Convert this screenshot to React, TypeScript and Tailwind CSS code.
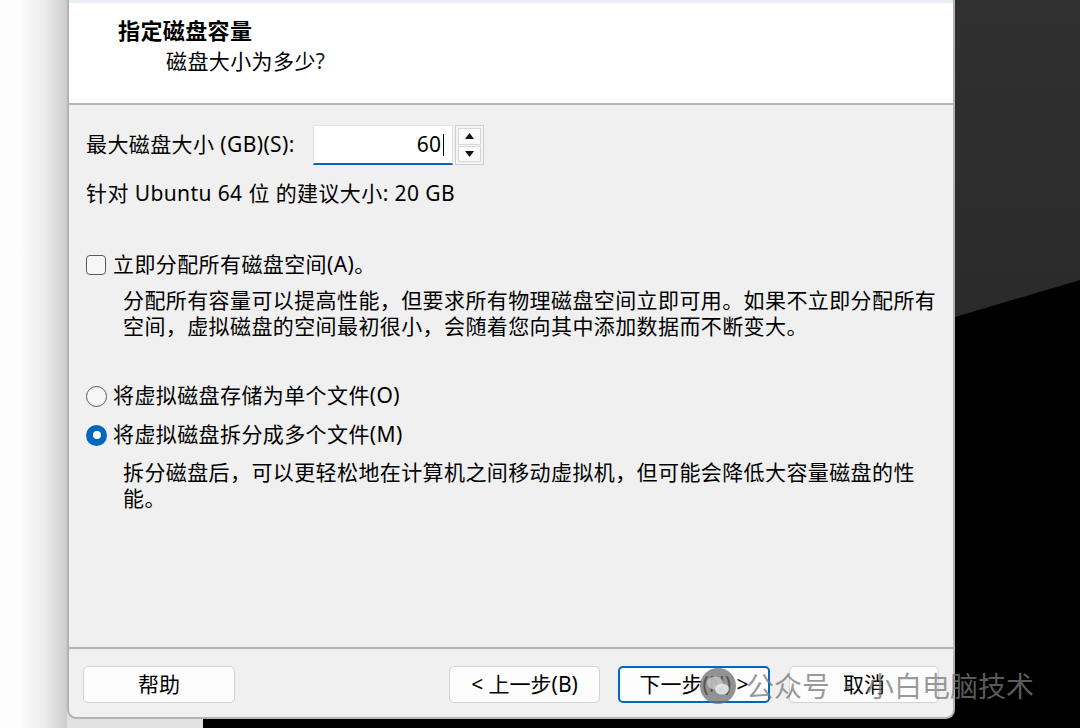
import React from "react";

const font = "font-['Noto_Sans','Noto_Sans_CJK_SC',sans-serif]";

function Btn({ text, primary, w }: { text: string; primary?: boolean; w: string }) {
  return (
    <div
      className={`flex h-[37px] ${w} items-center justify-center rounded-[5px] bg-[#fdfdfd] text-[21px] text-black ${
        primary ? "border-2 border-[#0067c0]" : "border border-[#d2d2d2]"
      }`}
    >
      {text}
    </div>
  );
}

function Radio({ checked, label }: { checked?: boolean; label: string }) {
  return (
    <div className="flex h-[28px] items-center">
      {checked ? (
        <div className="flex h-[21px] w-[21px] items-center justify-center rounded-full bg-[#0067c0]">
          <div className="h-[8px] w-[8px] rounded-full bg-white" />
        </div>
      ) : (
        <div className="h-[21px] w-[21px] rounded-full border-[1.5px] border-[#5a5a5a] bg-[#f6f6f6]" />
      )}
      <span className="ml-[6px]">{label}</span>
    </div>
  );
}

export default function App() {
  return (
    <div className={`relative flex h-[728px] w-[1080px] overflow-hidden bg-[#2b2b2b] ${font}`}>
      {/* shadow on the left */}
      <div className="w-[67px] shrink-0 bg-[linear-gradient(to_right,#fdfdfd_20px,#ececec_45px,#cdcdcd_67px)]" />

      {/* dialog */}
      <div className="flex w-[888px] shrink-0 flex-col bg-[linear-gradient(to_right,#e2e2e2_136px,#000_136px)]">
        <div className="flex h-[719px] flex-col overflow-hidden rounded-b-[9px] border-x-2 border-b-2 border-[#b3b3b3] bg-[#f0f0f0] text-[21px] tracking-[0.4px] text-black">
          {/* header */}
          <div className="h-[105px] shrink-0 border-b-2 border-[#b5b5b5] bg-white">
            <div className="h-[3px] bg-[#e9eef6]" />
            <div className="pl-[49px] pt-[14px] text-[22px] font-bold leading-[26px]">指定磁盘容量</div>
            <div className="pl-[97px] pt-[5px] text-[21px] leading-[26px]">
              磁盘大小为多少<span className="text-[#222]">?</span>
            </div>
          </div>

          {/* body */}
          <div className="flex flex-1 flex-col whitespace-nowrap pl-[17px] pt-[20px]">
            <div className="flex h-[40px] items-center">
              <span className="w-[227px]">最大磁盘大小 (GB)(S):</span>
              <div className="flex h-[40px] w-[140px] items-center justify-end border border-b-2 border-[#e3e3e3] border-b-[#0067c0] bg-white pr-[8px]">
                <span>60</span>
                <div className="ml-[1px] h-[22px] w-[1.5px] bg-black" />
              </div>
              <div className="ml-[2px] flex h-[40px] w-[29px] flex-col gap-[1px] border border-[#cfcfcf] bg-[#f4f4f4] p-[2px]">
                <div className="flex flex-1 items-center justify-center border border-[#d8d8d8] bg-[#fafafa]">
                  <svg width="9" height="6" viewBox="0 0 9 6">
                    <path d="M4.5 0 L9 6 L0 6 Z" fill="#111" />
                  </svg>
                </div>
                <div className="flex flex-1 items-center justify-center border border-[#d8d8d8] bg-[#fafafa]">
                  <svg width="9" height="6" viewBox="0 0 9 6">
                    <path d="M0 0 L9 0 L4.5 6 Z" fill="#111" />
                  </svg>
                </div>
              </div>
            </div>

            <div className="mt-[15px] flex h-[28px] items-center">针对 Ubuntu 64 位 的建议大小: 20 GB</div>

            <div className="mt-[43px] flex h-[28px] items-center">
              <div className="h-[20px] w-[20px] rounded-[4px] border-[1.5px] border-[#5a5a5a] bg-[#f6f6f6]" />
              <span className="ml-[7px]">立即分配所有磁盘空间(A)。</span>
            </div>
            <div className="mt-[8px] pl-[37px] leading-[26px]">
              <div>分配所有容量可以提高性能，但要求所有物理磁盘空间立即可用。如果不立即分配所有</div>
              <div>空间，虚拟磁盘的空间最初很小，会随着您向其中添加数据而不断变大。</div>
            </div>

            <div className="mt-[43px]">
              <Radio label="将虚拟磁盘存储为单个文件(O)" />
            </div>
            <div className="mt-[11px]">
              <Radio checked label="将虚拟磁盘拆分成多个文件(M)" />
            </div>
            <div className="mt-[10px] pl-[37px] leading-[26px]">
              <div>拆分磁盘后，可以更轻松地在计算机之间移动虚拟机，但可能会降低大容量磁盘的性</div>
              <div>能。</div>
            </div>
          </div>

          {/* footer */}
          <div className="flex h-[70px] shrink-0 items-start border-t-2 border-[#b0b0b0] px-[14px] pt-[17px] tracking-normal">
            <Btn text="帮助" w="w-[152px]" />
            <div className="flex-1" />
            <Btn text="< 上一步(B)" w="w-[151px]" />
            <div className="w-[18px]" />
            <Btn text="下一步(N) >" primary w="w-[152px]" />
            <div className="w-[19px]" />
            <Btn text="取消" w="w-[150px]" />
          </div>
        </div>
      </div>

      {/* desktop wallpaper on the right */}
      <div className="h-[728px] w-[125px] shrink-0 bg-[#2b2b2b]">
        <svg width="125" height="728" viewBox="0 0 125 728" className="block">
          <defs>
            <linearGradient id="wall" x1="0" y1="0" x2="0" y2="1">
              <stop offset="0" stopColor="#303030" />
              <stop offset="1" stopColor="#2a2a2a" />
            </linearGradient>
          </defs>
          <rect x="0" y="0" width="125" height="330" fill="url(#wall)" />
          <polygon points="0,317 125,280 125,728 0,728" fill="#000000" />
        </svg>
      </div>

      {/* watermark */}
      <div className="absolute left-[700px] top-[668px] flex items-center text-[28px] leading-[36px] text-[rgba(120,120,120,0.75)]">
        <svg width="36" height="36" viewBox="0 0 36 36">
          <circle cx="18" cy="18" r="18" fill="rgba(110,110,110,0.75)" />
          <ellipse cx="15" cy="15" rx="8" ry="6.5" fill="rgba(200,200,200,0.8)" />
          <ellipse cx="22" cy="21" rx="7" ry="5.5" fill="rgba(235,235,235,0.85)" />
        </svg>
        <span className="ml-[10px]">公众号</span>
        <span className="w-[36px] text-center">·</span>
        <span>小白电脑技术</span>
      </div>
    </div>
  );
}
